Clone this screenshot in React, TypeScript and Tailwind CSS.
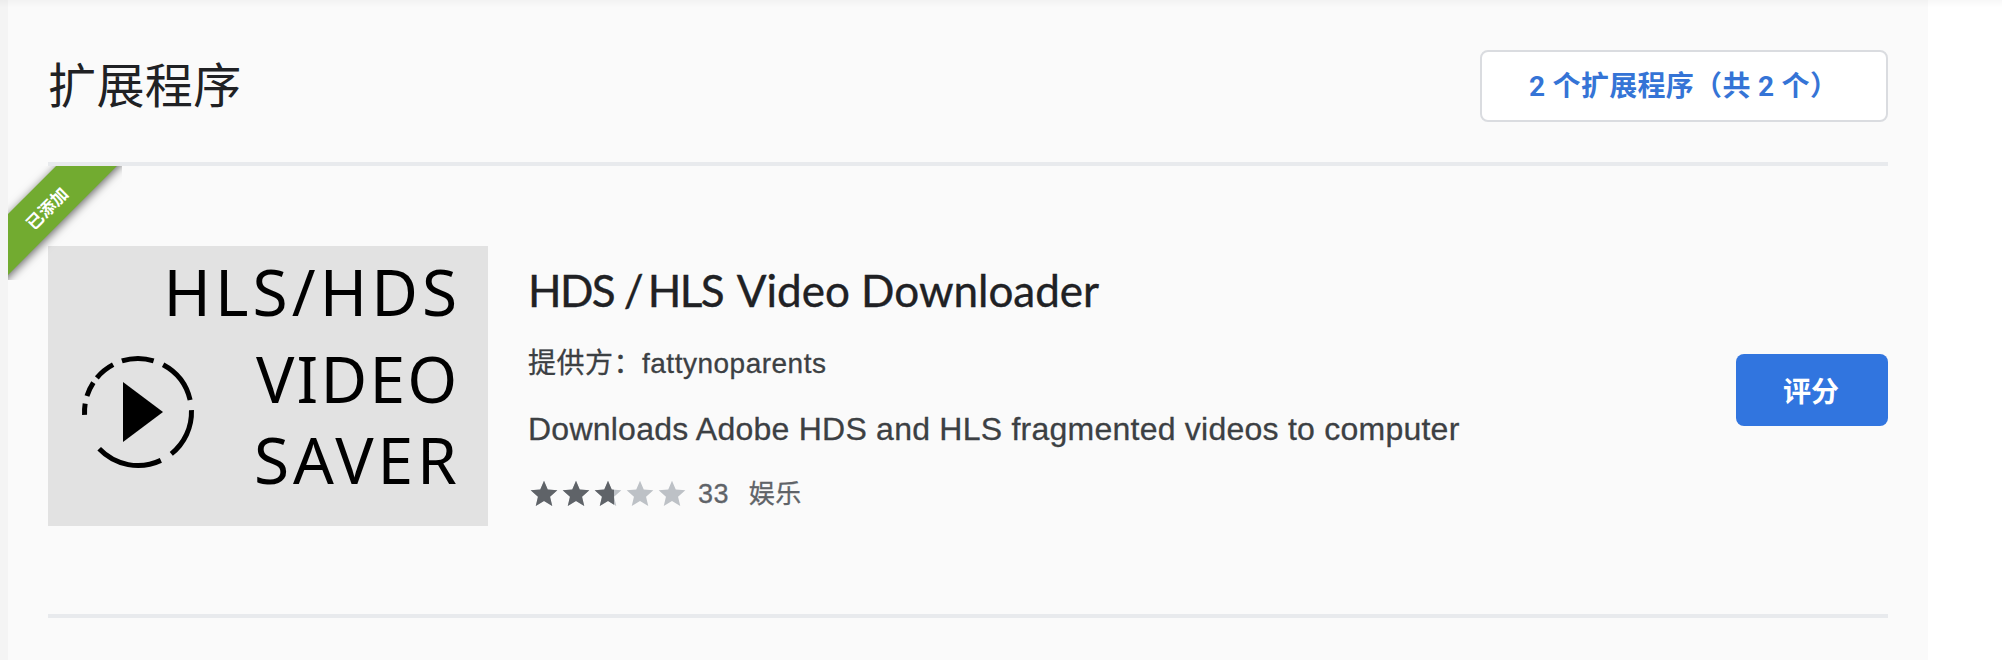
import React from "react";

const STAR = "M12 17.27 18.18 21l-1.64-7.03L22 9.24l-7.19-.61L12 2 9.19 8.63 2 9.24l5.46 4.73L5.82 21z";

// Dash segments of the play ring, in degrees clockwise from the top.
const RING: [number, number][] = [
  [-17.5, 17],
  [28, 77],
  [88, 141.5],
  [154.7, 226.5],
  [267, 279],
  [287.4, 303.4],
  [309.7, 332.3],
];

function arc([from, to]: [number, number]) {
  const r = 53.5;
  const point = (deg: number) => {
    const a = (deg * Math.PI) / 180;
    return `${(90 + r * Math.sin(a)).toFixed(2)} ${(166 - r * Math.cos(a)).toFixed(2)}`;
  };
  return `M${point(from)}A${r} ${r} 0 0 1 ${point(to)}`;
}

function Star({ fill }: { fill: number }) {
  return (
    <span className="relative block size-8">
      <svg viewBox="0 0 24 24" className="block size-8 fill-[#bdc1c6]">
        <path d={STAR} />
      </svg>
      <span className="absolute inset-y-0 left-0 overflow-hidden" style={{ width: `${fill * 100}%` }}>
        <svg viewBox="0 0 24 24" className="block size-8 max-w-none fill-[#5f6368]">
          <path d={STAR} />
        </svg>
      </span>
    </span>
  );
}

function Thumbnail() {
  return (
    <svg
      viewBox="0 0 440 280"
      className="block h-[280px] w-[440px] shrink-0 bg-[#e2e2e2] font-['Noto_Sans',sans-serif] text-[64px]"
    >
      <text x="115.4" y="70.3" letterSpacing="4.1">HLS/HDS</text>
      <text x="208" y="157.3" letterSpacing="2.2">VIDEO</text>
      <text x="206" y="238" letterSpacing="3.9">SAVER</text>
      {RING.map((seg) => (
        <path key={seg[0]} d={arc(seg)} fill="none" stroke="#000" strokeWidth="5" />
      ))}
      <path d="M75 136v60l40-30z" />
    </svg>
  );
}

function Ribbon() {
  return (
    <div className="absolute top-0 left-0 size-[114px] overflow-hidden">
      <div className="absolute top-[18px] -left-[61px] h-[43px] w-[200px] -rotate-45 bg-[#72ab30] text-center font-['Noto_Sans_CJK_SC',sans-serif] text-[17px] leading-[45px] font-bold text-white shadow-[0_2px_10px_rgba(0,0,0,0.6)]">
        <span className="mr-1">已添加</span>
      </div>
    </div>
  );
}

export default function App() {
  return (
    <div className="relative flex h-[660px] w-[2002px] overflow-hidden bg-white font-['Liberation_Sans','Noto_Sans_CJK_SC',sans-serif]">
      <div className="w-2 bg-[#f4f4f4]" />
      <main className="w-[1920px] bg-[#fafafa]">
        <header className="mx-10 flex h-[166px] items-start justify-between border-b-4 border-[#e8eaed] pt-[50px]">
          <h1 className="-mt-[2px] font-['Noto_Sans_CJK_SC',sans-serif] text-[48px] leading-[68px] tracking-[0.4px] text-[#202124]">扩展程序</h1>
          <button className="h-[72px] w-[408px] rounded-lg border-2 border-[#dadce0] bg-white pt-[2px] pl-[47px] text-left font-['Roboto','Noto_Sans_CJK_SC',sans-serif] text-[28px] leading-[66px] font-bold tracking-[0.3px] whitespace-nowrap text-[#3574d6]">
            2 个扩展程序（共 2 个）
          </button>
        </header>
        <section className="relative">
          <Ribbon />
          <div className="mx-10 flex h-[452px] border-b-4 border-[#e8eaed] pt-20">
            <Thumbnail />
            <div className="ml-10 flex flex-col pt-[16px]">
              <h2 className="font-['Lato',sans-serif] text-[44px] leading-[56px] whitespace-nowrap text-[#202124] [-webkit-text-stroke:0.4px]">
                <span className="tracking-[-1.6px]">HDS /</span>
                <span className="mr-1 -ml-1 tracking-[-1.6px]"> HLS </span>
                Video Downloader
              </h2>
              <p className="mt-[26px] text-[28px] leading-[40px] tracking-[0.5px] text-[#3c4043] [-webkit-text-stroke:0.3px]">
                提供方：fattynoparents
              </p>
              <p className="mt-[21px] text-[32px] leading-[48px] tracking-[0.24px] whitespace-nowrap text-[#3c4043] [-webkit-text-stroke:0.3px]">
                Downloads Adobe HDS and HLS fragmented videos to computer
              </p>
              <div className="mt-[25px] flex h-8 items-center text-[26px] leading-8 tracking-[0.4px] text-[#5f6368] [-webkit-text-stroke:0.3px]">
                {[1, 1, 0.7, 0, 0].map((fill, i) => (
                  <Star key={i} fill={fill} />
                ))}
                <span className="ml-[10px] text-[27px]">33</span>
                <span className="ml-5">娱乐</span>
              </div>
            </div>
            <button className="mt-[108px] ml-auto h-[72px] w-[152px] rounded-lg bg-[#3175df] pr-[2px] font-['Noto_Sans_CJK_SC',sans-serif] text-[28px] leading-[70px] font-bold text-white">
              评分
            </button>
          </div>
        </section>
      </main>
      <div className="absolute inset-x-0 top-0 h-2 bg-linear-to-b from-black/3 to-transparent" />
    </div>
  );
}
